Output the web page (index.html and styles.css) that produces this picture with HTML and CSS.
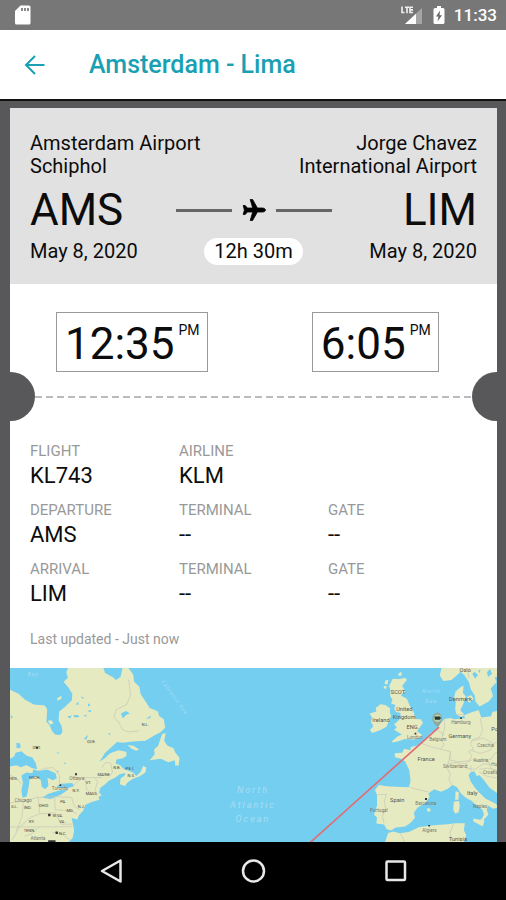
FILE: index.html
```html
<!DOCTYPE html>
<html lang="en">
<head>
<meta charset="utf-8">
<meta name="viewport" content="width=device-width, initial-scale=1">
<title>Amsterdam - Lima</title>
<link rel="stylesheet" href="styles.css">
</head>
<body>
<div class="status-bar">
  <svg class="icon-sd" viewBox="0 0 18 20" width="18" height="20" aria-hidden="true"><path fill="#fff" d="M6.500 .5H15q1.500 0 1.500 1.500v16q0 1.500-1.500 1.500H2.500Q1 19.500 1 18V6z"/><path stroke="#8b8b8b" stroke-width="2" d="M8 3v3M11 3v3M14 3v3"/></svg>
  <div class="status-right">
    <svg viewBox="0 0 24 20" width="24" height="20" aria-hidden="true"><path fill="#a5a5a5" d="M22 3v16H5z"/><path fill="#fff" d="M16 8.700V19H5z"/><path d="M2.500 1.500v6h3M5 2.300h4M7 2.300v6M13 2.300h-3v5.200h3M10 5h3" fill="none" stroke="#777" stroke-width="3"/><path d="M2 1.500v6h2.500M5 2.200h4M7 2.200v6M13 2.200h-3v5.300h3M10 4.900h3" fill="none" stroke="#f0f0f0" stroke-width="1.600"/></svg>
    <svg viewBox="0 0 14 20" width="14" height="20" aria-hidden="true"><path fill="#fff" d="M5 1h4v2h2q1.500 0 1.500 1.500v13Q12.500 19 11 19H3q-1.500 0-1.500-1.500v-13Q1.500 3 3 3h2z"/><path fill="#666" d="M8 5.500 4 11.500h2.500L5.500 16.500l4.500-6.300H7.500z"/></svg>
    <span class="clock">11:33</span>
  </div>
</div>

<header class="app-bar">
  <button class="back" type="button" aria-label="Back"><svg viewBox="0 0 22 22" width="22" height="22" aria-hidden="true"><path d="M20.500 11H2M11 2 2 11l9 9" fill="none" stroke="currentColor" stroke-width="2"/></svg></button>
  <h1 class="title">Amsterdam - Lima</h1>
</header>

<main class="page">
  <article class="ticket">
    <section class="route">
      <div class="airports">
        <p>Amsterdam Airport<br>Schiphol</p>
        <p class="end">Jorge Chavez<br>International Airport</p>
      </div>
      <div class="legs">
        <span class="code">AMS</span>
        <div class="path">
          <span class="rule"></span>
          <svg viewBox="0 0 24 24" width="24" height="24" aria-hidden="true"><path stroke="#000" stroke-width=".8" stroke-linejoin="round" transform="rotate(90 12 12) translate(0 .3)" d="M22.500 15.500v-2.400l-8.500-4.800V3.200C14 1.500 13 .2 12 .2S10 1.500 10 3.200v5.100l-8.500 4.800v2.400L10 13v5.300L7.500 20.500v2l4.500-1.200 4.500 1.200v-2L14 18.300V13z"/></svg>
          <span class="rule"></span>
        </div>
        <span class="code end">LIM</span>
        <span>May 8, 2020</span>
        <span class="duration">12h 30m</span>
        <span class="end">May 8, 2020</span>
      </div>
    </section>

    <section class="times">
      <div class="time"><span class="digits">12:35</span><span class="period">PM</span></div>
      <div class="time"><span class="digits">6:05</span><span class="period">PM</span></div>
    </section>

    <div class="tear"><span class="notch notch-left"></span><span class="perforation"></span><span class="notch notch-right"></span></div>

    <dl class="details">
      <div><dt>FLIGHT</dt><dd>KL743</dd></div>
      <div class="wide"><dt>AIRLINE</dt><dd>KLM</dd></div>
      <div><dt>DEPARTURE</dt><dd>AMS</dd></div>
      <div><dt>TERMINAL</dt><dd>--</dd></div>
      <div><dt>GATE</dt><dd>--</dd></div>
      <div><dt>ARRIVAL</dt><dd>LIM</dd></div>
      <div><dt>TERMINAL</dt><dd>--</dd></div>
      <div><dt>GATE</dt><dd>--</dd></div>
    </dl>
    <p class="updated">Last updated - Just now</p>

    <div class="map">
    <svg viewBox="10 669 487 173" preserveAspectRatio="xMidYMin slice" role="img" aria-label="Flight path map">
      <rect x="10" y="669" width="487" height="300" fill="#74cef0"/>
      <!-- North America -->
      <g transform="translate(0 660) scale(.33333)">
        <g fill="#e6eac1">
          <path d="M30 90 60 104 78 121 105 136 138 139 145 150 143 187 153 199 160 216 170 226 184 227 191 218 188 200 179 183 181 157 196 145 219 123 220 104 209 86 194 68 207 56 202 40 208 25H312L318 42 340 54 350 63 364 54 370 25H386L402 47 404 67 420 83 424 105 438 126 451 146 475 156 479 170 493 180 497 205 484 218 462 230 438 244 399 246 371 250 353 248 339 261 318 280 301 307 316 297 333 281 358 272 381 277 382 289 371 296 352 300 349 312 363 317 374 329 386 333 401 339 411 349 424 337 431 319 441 324 438 339 421 350 400 358 386 367 377 379 362 374 364 356 375 349 379 340 361 344 350 353 329 363 318 374 303 385 300 398 308 407 298 411 301 420 280 426 259 435 253 452 240 466 235 480 225 475 228 503 221 534 208 547H30z"/>
          <path d="M488 224 499 221 494 244 503 258 522 266 527 279 540 295 537 318 527 318 526 302 506 308 484 298 451 302 466 284 464 270 476 259z"/>
          <path d="M384 257 402 259 419 269 411 274 397 268zM174 118 189 109 187 119 177 125zM147 184 158 183 164 192 153 196z"/>
        </g>
        <g fill="#74cef0">
          <path d="M30 300 46 292 51 280 68 275 83 288 101 294 111 310 115 329 99 325 83 316 67 323 53 317 30 322zM68 348 83 339 101 341 104 329 119 334 145 330 170 341 174 356 162 362 146 354 149 378 139 389 129 381 126 361 111 350 93 357 91 375 84 410 72 414 68 392 73 369zM130 414 147 403 173 395 188 391 206 391 185 405 156 418zM174 379 188 372 220 370 225 380 205 386 181 385zM53 250 64 252 66 265 54 266zM254 238 268 226 262 240zM365 163 380 155 392 163 380 167 371 178zM204 172 218 169 214 178zM222 168 236 167 242 173 228 175zM253 170 261 166 263 172zM264 155 276 152 276 159zM440 178 456 169 451 178zM230 135 239 128 238 137zM246 112 255 115 250 119zM36 168 43 172 38 179zM173 278 180 280 179 285zM326 221 333 222 333 228zM320 25 340 25 337 31zM218 474 229 480 232 503 227 520 223 498z"/>
          <path d="M267 132 275 138 267 142zM175 332 180 336 175 340zM195 308 202 311 198 315z"/>
        </g>
        <path class="borders" d="M388 62 394 107 382 136 351 151 344 174 358 188 370 211 388 218 419 214M118 334 139 326 163 324 182 347 182 371 207 390M225 376 250 354H308M308 326 319 309 334 310 340 338 331 350M286 354 296 365 288 390 294 407M258 356 263 390 285 406M30 345 55 357 69 374M30 430 75 424 118 412 123 462 97 472 63 501 40 540M118 413 174 411 218 413 226 439 242 451M167 410 169 450 213 452 233 461M74 426 70 471 53 513M124 462 169 459 187 493 220 493M30 501H152L218 500M122 500 101 521 78 529M161 517 191 523 214 541"/>
        <g class="map-label dark">
          <text x="101" y="269">ONT.</text><text x="264" y="252">QUE.</text><text x="427" y="199">N.L.</text><text x="342" y="327">N.B.</text><text x="379" y="330">P.E.I.</text><text x="385" y="352">N.S.</text><text x="295" y="349">MAINE</text><text x="92" y="359">MICH.</text><text x="34" y="362">WIS.</text><text x="260" y="373">VT.</text><text x="221" y="398">N.Y.</text><text x="260" y="406">MASS.</text><text x="184" y="429">PA.</text><text x="120" y="441">OHIO</text><text x="76" y="448">IND.</text><text x="38" y="445">ILL.</text><text x="203" y="457">MD.</text><text x="236" y="445">N.J.</text><text x="161" y="470">W.VA.</text><text x="181" y="488">VA.</text><text x="91" y="490">KY.</text><text x="75" y="516">TENN.</text><text x="180" y="524">N.C.</text>
        </g>
        <g class="map-label">
          <text x="211" y="360">Ottawa</text><text x="159" y="392">Toronto</text><text x="48" y="426">Chicago</text><text x="95" y="541">Atlanta</text>
        </g>
        <path fill="#333" d="M112 262h6v6h-6zM228 341h6v6h-6zM182 374h5v5h-5zM148 462h7v7h-7zM170 515h7v7h-7zM148 541h22v6h-22z"/>
      </g>
      <!-- Europe and North Africa -->
      <g transform="translate(340 660) scale(.33333)">
        <g fill="#e6eac1">
          <path d="M156 59 177 60 193 56 198 63 184 80 193 96 180 109 198 119 207 140 218 158 223 179 240 180 246 191 237 204 228 216 242 225 242 234 218 240 191 239 178 244 157 249 153 246 170 231 183 225 172 219 160 211 168 204 160 195 172 184 179 178 179 161 166 158 160 148 164 137 151 133 155 120 148 111 149 93 145 81zM105 146 119 135 134 137 148 147 147 160 151 169 145 185 137 202 118 213 94 221 88 211 98 201 91 188 94 175 87 163 107 157zM134 64 143 62 140 76 131 74zM131 80 138 82 136 90 128 87zM172 44 181 38 183 49 174 51z"/>
          <path d="M472 131V154L453 158 449 171 420 175 412 153 393 158 374 166 360 173 346 166 342 149 344 128 338 120 343 97 359 84 367 79 365 101 374 112 365 137 357 153 368 164 371 177 339 180 327 176 309 179 297 194 291 205 270 221 246 246 230 258 210 263 208 272 190 268 184 280 162 281 162 293 178 297 193 306 205 331 209 365 204 383 163 381 137 380 114 376 103 391 109 406 109 437 100 465 109 473 107 491 130 494 138 508 151 512 165 503 193 500 210 488 222 474 219 459 230 443 253 430 266 411 262 401 279 389 300 396 320 387 334 376 347 382 360 402 374 414 392 424 402 434 423 449 428 465 420 480 431 476 441 464 436 449 441 438 455 447 472 442 462 431 432 416 412 397 400 383 388 365 382 346 389 337 399 335 407 350 414 346 428 362 445 384 472 404z"/>
          <path d="M379 112 390 108 397 119 385 130 376 124zM395 476 415 480 427 475 429 485 424 500 397 485zM343 395 353 397 352 420 342 420zM338 426 353 424 356 438 352 458 342 461 336 449zM257 446 266 445 270 451 261 457zM133 547 142 519 158 515 176 520 204 516 235 501 279 496 320 493 343 490 371 490 368 510 375 526 368 547z"/>
          <path d="M302 25H472V53L460 55 466 69 448 88 455 111 442 127 415 142 403 128 400 108 389 91 383 69 369 48 358 38 346 50 331 63 307 66 296 49z"/>
        </g>
        <path fill="#74cef0" d="M393 45 400 38 410 48 402 59zM411 34 418 32 414 43zM437 40 446 30 452 44 440 54z"/>
        <path class="borders" d="M208 383 233 390 263 397M111 405 137 404 131 423 135 449 125 469 130 490M239 251 269 262 302 270 328 276 324 303 316 322 328 345 323 360 333 376M285 211 307 223 301 241 309 255 299 268M309 179 311 205 303 230M346 166 368 166M329 275 326 301 349 307 383 304 392 289 382 276 397 269 388 254 393 241 414 234 424 213 417 178M394 244 425 236 459 253 446 272 417 282 391 273M317 314 339 309 372 312 394 300 417 305 449 299 460 281 472 276M372 314 378 327 402 329 425 313 449 314M414 329 439 326 472 333M414 337 437 350 472 356M459 252 472 244M386 25 380 42 383 58M178 520 192 547M337 492 326 520 333 546M389 335 389 318M441 304 448 325 463 335"/>
        <path d="M-92 549 294 203" fill="none" stroke="#df6f75" stroke-width="5"/>
        <g class="map-label country">
          <text x="150" y="105">SCOT.</text><text x="166" y="156">United</text><text x="156" y="178">Kingdom</text><text x="95" y="189">Ireland</text><text x="197" y="208">ENG.</text><text x="324" y="126">Denmark</text><text x="322" y="235">Germany</text><text x="230" y="304">France</text><text x="148" y="427">Spain</text><text x="377" y="405">Italy</text><text x="450" y="214">Po</text><text x="355" y="40">Oslo</text><text x="323" y="543">Tunisia</text>
        </g>
        <g class="map-label">
          <text x="198" y="239">London</text><text x="330" y="193">Hamburg</text><text x="265" y="245">Belgium</text><text x="306" y="324">Switzerland</text><text x="408" y="264">Czechia</text><text x="396" y="306">Austria</text><text x="450" y="319">Hu</text><text x="425" y="343">Croatia</text><text x="88" y="456">Portugal</text><text x="223" y="437">Barcelona</text><text x="395" y="445">Naples</text><text x="244" y="516">Algiers</text>
        </g>
        <path fill="#333" d="M221 220h5v5h-5zM357 174h5v5h-5zM252 415h6v6h-6zM262 495h5v5h-5z"/>
        <path fill="#8fa99a" d="M289 160q14 3 14 19 0 11-14 24-15-13-15-24 0-17 15-19z"/>
        <circle cx="289" cy="177" r="11" fill="#b9d0b0"/><path fill="#26382f" d="M280 172h16l4 4-4 5h-14z"/>
        <g class="sea"><text x="243" y="102">North</text><text x="253" y="130">Sea</text></g>
      </g>
      <g class="sea ocean"><text x="253" y="793">North</text><text x="253" y="808">Atlantic</text><text x="253" y="822">Ocean</text></g>
      <g class="sea small"><text x="29" y="677">Bay</text><text transform="translate(162 683) rotate(54)">Labrador Sea</text></g>
    </svg>
    </div>
  </article>
</main>

<nav class="system-nav" aria-label="System">
  <button type="button" aria-label="Back"><svg viewBox="0 0 26 26" width="26" height="26" aria-hidden="true"><path d="M22.500 2.500v21L4 13z"/></svg></button>
  <button type="button" aria-label="Home"><svg viewBox="0 0 26 26" width="26" height="26" aria-hidden="true"><circle cx="13.500" cy="13" r="10.500"/></svg></button>
  <button type="button" aria-label="Recent apps"><svg viewBox="0 0 26 26" width="26" height="26" aria-hidden="true"><rect x="4.500" y="3.500" width="18.500" height="18.500" rx="1"/></svg></button>
</nav>
</body>
</html>
```
FILE: styles.css
```css
* {
  box-sizing: border-box;
}

body {
  margin: 0;
  height: 100vh;
  display: flex;
  flex-direction: column;
  background: #58585a;
  color: #0c0c0c;
  font-family: Roboto, "Liberation Sans", sans-serif;
  font-size: 20px;
}

h1, p, dl, dd {
  margin: 0;
}

svg {
  display: block;
}

button {
  display: flex;
  align-items: center;
  justify-content: center;
  padding: 0;
  border: 0;
  background: none;
  color: inherit;
}

.status-bar {
  flex: none;
  height: 30px;
  padding: 0 9px 0 14px;
  display: flex;
  align-items: center;
  justify-content: space-between;
  background: #777;
  color: #fff;
}

.status-right {
  display: flex;
  align-items: center;
  gap: 8px;
}

.clock {
  font-size: 17px;
  font-weight: 500;
  line-height: 20px;
}

.app-bar {
  flex: none;
  height: 71px;
  padding: 0 11px;
  display: flex;
  align-items: center;
  gap: 30px;
  background: #fff;
  border-bottom: 2px solid #111;
  color: #1a9fb3;
}

.back {
  width: 48px;
  height: 48px;
}

.title {
  font-size: 25px;
  font-weight: 500;
  line-height: 32px;
}

.page {
  flex: 1;
  min-height: 0;
  padding: 7px 9px 0 10px;
  display: flex;
}

.ticket {
  flex: 1;
  min-width: 0;
  display: flex;
  flex-direction: column;
  background: #fff;
}

.route {
  padding: 24px 20px 19px;
  background: #e1e1e1;
}

.airports {
  display: flex;
  justify-content: space-between;
  line-height: 23px;
}

.end {
  text-align: right;
}

.legs {
  padding-top: 5px;
  display: grid;
  grid-template-columns: 1fr auto 1fr;
  grid-template-rows: 54px 28px;
  align-items: center;
}

.code {
  font-size: 44px;
  line-height: 54px;
}

.path {
  display: flex;
  align-items: center;
  gap: 10px;
}

.rule {
  width: 56px;
  height: 3px;
  background: #666;
}

.duration {
  justify-self: center;
  padding: 0 10px;
  border-radius: 14px;
  background: #fff;
  line-height: 27px;
}

.times {
  padding: 28px 0 0;
  display: grid;
  grid-template-columns: 1fr 1fr;
  justify-items: center;
}

.time {
  height: 60px;
  padding: 0 7px 0 8px;
  display: flex;
  gap: 4px;
  border: 1px solid #999;
}

.digits {
  font-size: 44px;
  line-height: 62px;
}

.period {
  font-size: 14px;
  line-height: 34px;
}

.tear {
  height: 49px;
  display: flex;
  align-items: center;
}

.notch {
  width: 25px;
  height: 49px;
  background: #58585a;
}

.notch-left {
  border-radius: 0 25px 25px 0;
}

.notch-right {
  border-radius: 25px 0 0 25px;
}

.perforation {
  flex: 1;
  height: 2px;
  background: repeating-linear-gradient(90deg, #bbb 0 7px, transparent 7px 11px);
}

.details {
  padding: 20px 20px 0;
  display: grid;
  grid-template-columns: repeat(3, 1fr);
  row-gap: 9px;
}

.wide {
  grid-column: span 2;
}

dt {
  color: #999;
  font-size: 15px;
  line-height: 20px;
}

dd {
  font-size: 22px;
  line-height: 30px;
}

.updated {
  padding: 20px 20px 19px;
  color: #999;
  font-size: 14px;
  line-height: 20px;
}

.map {
  flex: 1;
  min-height: 0;
  overflow: hidden;
}

.map svg {
  width: 100%;
  height: 100%;
}

.borders {
  fill: none;
  stroke: #c5c6b6;
  stroke-width: 2;
}

.map-label {
  fill: #77776c;
  font-size: 14px;
}

.map-label.dark {
  fill: #44443e;
  font-size: 12px;
}

.map-label.country {
  fill: #55554e;
  font-size: 17px;
}

.sea {
  fill: #a6def5;
  font-size: 17px;
  font-style: italic;
  letter-spacing: 3px;
}

.sea.ocean {
  font-size: 9px;
  letter-spacing: 2px;
  text-anchor: middle;
}

.sea.small {
  font-size: 5px;
  letter-spacing: 1px;
}

.system-nav {
  flex: none;
  height: 58px;
  padding: 0 40px;
  display: flex;
  background: #000;
}

.system-nav button {
  flex: 1;
}

.system-nav svg {
  fill: none;
  stroke: #e8e8e8;
  stroke-width: 2.5;
  stroke-linejoin: round;
}
```
